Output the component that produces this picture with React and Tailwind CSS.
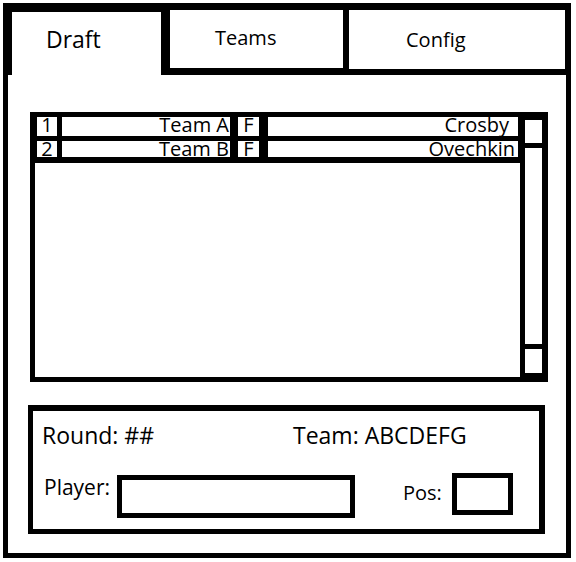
export default function App() {
  const rows = [
    { num: '1', team: 'Team A', pos: 'F', player: 'Crosby', h: 'h-[24px]', pb: 'pb-[5px]', pr: 'pr-[9px]' },
    { num: '2', team: 'Team B', pos: 'F', player: 'Ovechkin', h: 'h-[22px]', pb: 'pb-[6px]', pr: 'pr-[3px]' },
  ];

  return (
    <div className="w-[576px] h-[562px] bg-white pt-[3px] pl-[3px] text-black" style={{ fontFamily: '"Open Sans", sans-serif' }}>
      <div className="w-[568px]">
        {/* tabs */}
        <div className="flex h-[72px]">
          <div className="w-[158px] h-full border-l-[9px] border-t-[9px] border-black pl-[34px] pt-[16px] text-[23px] leading-[23px]">
            Draft
          </div>
          <div className="w-[188px] h-full border-l-[9px] border-t-[7px] border-r-[6px] border-b-[7px] border-black pl-[45px] pt-[18px] text-[20px] leading-[20px]">
            Teams
          </div>
          <div className="w-[222px] h-full border-t-[7px] border-r-[6px] border-b-[6px] border-black pl-[57px] pt-[20px] text-[20px] leading-[20px]">
            Config
          </div>
        </div>

        {/* body */}
        <div className="h-[483px] flex flex-col border-l-[5px] border-r-[5px] border-b-[5px] border-black">
          {/* draft list */}
          <div className="ml-[22px] mt-[37px] w-[518px] h-[270px] shrink-0 border-l-[5px] border-t-[5px] border-b-[5px] border-r-[6px] border-black flex">
            <div className="w-[485px] flex flex-col">
              {rows.map((r) => (
                <div key={r.num} className={`flex bg-black px-[2px] ${r.h} ${r.pb}`}>
                  <div className="w-[20px] h-full bg-white overflow-hidden text-center text-[20px]">
                    <div className="leading-[20px] mt-[-2px]">{r.num}</div>
                  </div>
                  <div className="w-[168px] ml-[5px] h-full bg-white overflow-hidden text-right text-[20px] pr-[1px]">
                    <div className="leading-[20px] mt-[-2px]">{r.team}</div>
                  </div>
                  <div className="w-[21px] ml-[8px] h-full bg-white overflow-hidden text-center text-[20px]">
                    <div className="leading-[20px] mt-[-2px]">{r.pos}</div>
                  </div>
                  <div className={`w-[250px] ml-[9px] h-full bg-white overflow-hidden text-right text-[20px] ${r.pr}`}>
                    <div className="leading-[20px] mt-[-2px]">{r.player}</div>
                  </div>
                </div>
              ))}
            </div>
            <div className="w-[22px] h-full border-l-[5px] border-t-[3px] border-b-[4px] border-black flex flex-col">
              <div className="h-[23px]"></div>
              <div className="h-[5px] bg-black"></div>
              <div className="flex-1"></div>
              <div className="h-[5px] bg-black"></div>
              <div className="h-[24px]"></div>
            </div>
          </div>

          {/* pick panel */}
          <div className="ml-[20px] mt-[23px] w-[517px] h-[129px] shrink-0 border-l-[5px] border-t-[6px] border-b-[5px] border-r-[6px] border-black flex flex-col">
            <div className="flex mt-[13px] text-[23px] leading-[22px]">
              <span className="w-[260px] pl-[9px]">Round: ##</span>
              <span>Team: ABCDEFG</span>
            </div>
            <div className="flex items-start mt-[27px]">
              <span className="w-[84px] pl-[11px] mt-[4px] text-[21px] leading-[21px]">Player:</span>
              <div className="w-[238px] h-[43px] mt-[2px] border-[5px] border-black"></div>
              <span className="ml-[48px] w-[49px] mt-[10px] text-[20px] leading-[20px]">Pos:</span>
              <div className="w-[61px] h-[42px] border-[5px] border-black"></div>
            </div>
          </div>
        </div>
      </div>
    </div>
  );
}
